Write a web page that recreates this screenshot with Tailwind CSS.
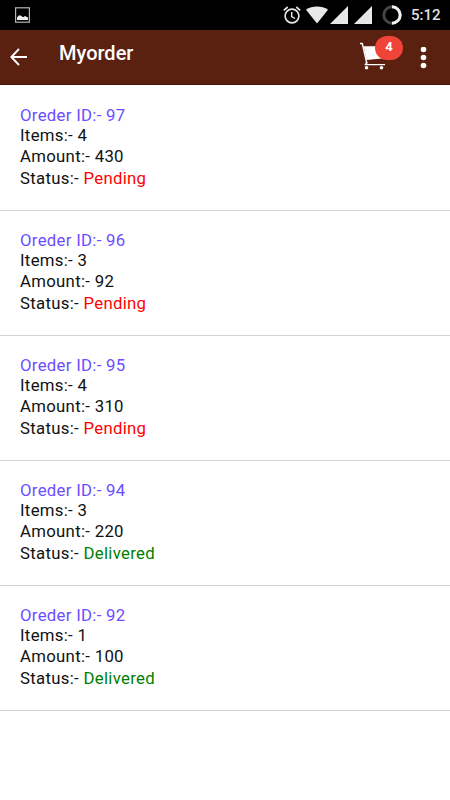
<!DOCTYPE html>
<html lang="en">
<head>
    <meta charset="UTF-8">
    <meta name="viewport" content="width=device-width, initial-scale=1.0">
    <title>Myorder</title>
    <script src="https://cdn.jsdelivr.net/npm/@tailwindcss/browser@4"></script>
</head>
<body class="bg-white font-['Roboto',sans-serif] text-[#111111] min-h-screen overflow-hidden">
    <!-- Status bar -->
    <div class="flex items-center h-[30px] bg-black pl-[15px] pr-[10px]">
        <svg class="w-[15px] h-[16px]" viewBox="0 0 15 16" fill="none">
            <rect x=".6" y=".8" width="13.8" height="14.4" stroke="#b5b5ae" stroke-width="1.2"/>
            <path d="M2 13V10.500l2-2.300 2 .5 2 1.600 2-1.300 3 1.600V13z" fill="#eeeeee"/>
        </svg>
        <svg class="ml-auto w-[18px] h-[18px]" viewBox="0 0 18 18" fill="none" stroke="#e8e8e8">
            <circle cx="9" cy="10" r="6.900" stroke-width="1.600"/>
            <path d="M.8 4.300L4.700 1M17.200 4.300L13.300 1" stroke-width="1.700"/>
            <path d="M8.700 6v4.500l3.300 2" stroke-width="1.400"/>
        </svg>
        <svg class="ml-[5px] w-[22px] h-[18px]" viewBox="0 0 22 18" fill="#e8e8e8">
            <path d="M0 3.800C6-.5 16-.5 22 3.800L11 17.500z"/>
        </svg>
        <svg class="ml-[2px] w-[18px] h-[18px]" viewBox="0 0 18 18" fill="#e8e8e8"><path d="M18 0v18H0z"/></svg>
        <svg class="ml-[6px] w-[18px] h-[18px]" viewBox="0 0 18 18" fill="#e8e8e8"><path d="M18 0v18H0z"/></svg>
        <svg class="ml-[10px] w-[20px] h-[20px]" viewBox="0 0 20 20" fill="none" stroke-width="3">
            <circle cx="10" cy="10" r="8.200" stroke="#444444"/>
            <path d="M10 1.800a8.200 8.200 0 0 1 0 16.400" stroke="#f2f2f2"/>
        </svg>
        <span class="ml-[9px] w-[29px] whitespace-nowrap text-[15px] leading-[32px] font-medium text-[#e0e0e0]">5:12</span>
    </div>

    <!-- App bar -->
    <header class="flex h-[55px] bg-[#5a2110] text-white border-b border-[#4a140c]">
        <svg class="ml-[10px] mt-[18px] w-[17px] h-[18px]" viewBox="0 0 17 18" fill="none" stroke="white" stroke-width="1.900">
            <path d="M17 9H1.500M9 1L1.300 9 9 17"/>
        </svg>
        <h1 class="ml-[32px] mt-[9px] text-[20px] leading-[28px] font-medium">Myorder</h1>
        <div class="relative ml-auto mr-[18px] mt-[12px] w-[26px] h-[30px]">
            <svg class="w-[26px] h-[30px]" viewBox="0 0 26 30" fill="none">
                <path d="M0 1.500h2.300L6.800 21.300" stroke="white" stroke-width="1.400"/>
                <path d="M3.700 4.200H24L22 16.500 6.500 18z" fill="white"/>
                <path d="M7.200 20L5.500 22.600H25" stroke="white" stroke-width="1.400"/>
                <circle cx="6.500" cy="25.800" r="1.800" fill="white"/>
                <circle cx="21.500" cy="25.800" r="1.800" fill="white"/>
            </svg>
            <span class="absolute left-[15px] -top-[6px] w-[28px] h-[24px] rounded-full bg-[#f04438] text-center text-[13px] leading-[21px] font-bold">4</span>
        </div>
        <svg class="ml-[16px] mr-[23px] mt-[17px] w-[7px] h-[22px]" viewBox="0 0 7 22" fill="white">
            <circle cx="3.500" cy="2.500" r="2.800"/>
            <circle cx="3.500" cy="10.500" r="2.800"/>
            <circle cx="3.500" cy="18.500" r="2.800"/>
        </svg>
    </header>

    <!-- Orders -->
    <main class="pt-px text-[16.75px] leading-[21.25px] tracking-[0.3px]">
        <div class="h-[125px] px-5 pt-[19px] border-b border-[#d3d3d3]">
            <p class="text-[#6b4eff] h-5">Oreder ID:- 97</p>
            <p>Items:- 4</p>
            <p>Amount:- 430</p>
            <p>Status:- <span class="text-[#ff0000]">Pending</span></p>
        </div>
        <div class="h-[125px] px-5 pt-[19px] border-b border-[#d3d3d3]">
            <p class="text-[#6b4eff] h-5">Oreder ID:- 96</p>
            <p>Items:- 3</p>
            <p>Amount:- 92</p>
            <p>Status:- <span class="text-[#ff0000]">Pending</span></p>
        </div>
        <div class="h-[125px] px-5 pt-[19px] border-b border-[#d3d3d3]">
            <p class="text-[#6b4eff] h-5">Oreder ID:- 95</p>
            <p>Items:- 4</p>
            <p>Amount:- 310</p>
            <p>Status:- <span class="text-[#ff0000]">Pending</span></p>
        </div>
        <div class="h-[125px] px-5 pt-[19px] border-b border-[#d3d3d3]">
            <p class="text-[#6b4eff] h-5">Oreder ID:- 94</p>
            <p>Items:- 3</p>
            <p>Amount:- 220</p>
            <p>Status:- <span class="text-[#008000]">Delivered</span></p>
        </div>
        <div class="h-[125px] px-5 pt-[19px] border-b border-[#d3d3d3]">
            <p class="text-[#6b4eff] h-5">Oreder ID:- 92</p>
            <p>Items:- 1</p>
            <p>Amount:- 100</p>
            <p>Status:- <span class="text-[#008000]">Delivered</span></p>
        </div>
    </main>
</body>
</html>
